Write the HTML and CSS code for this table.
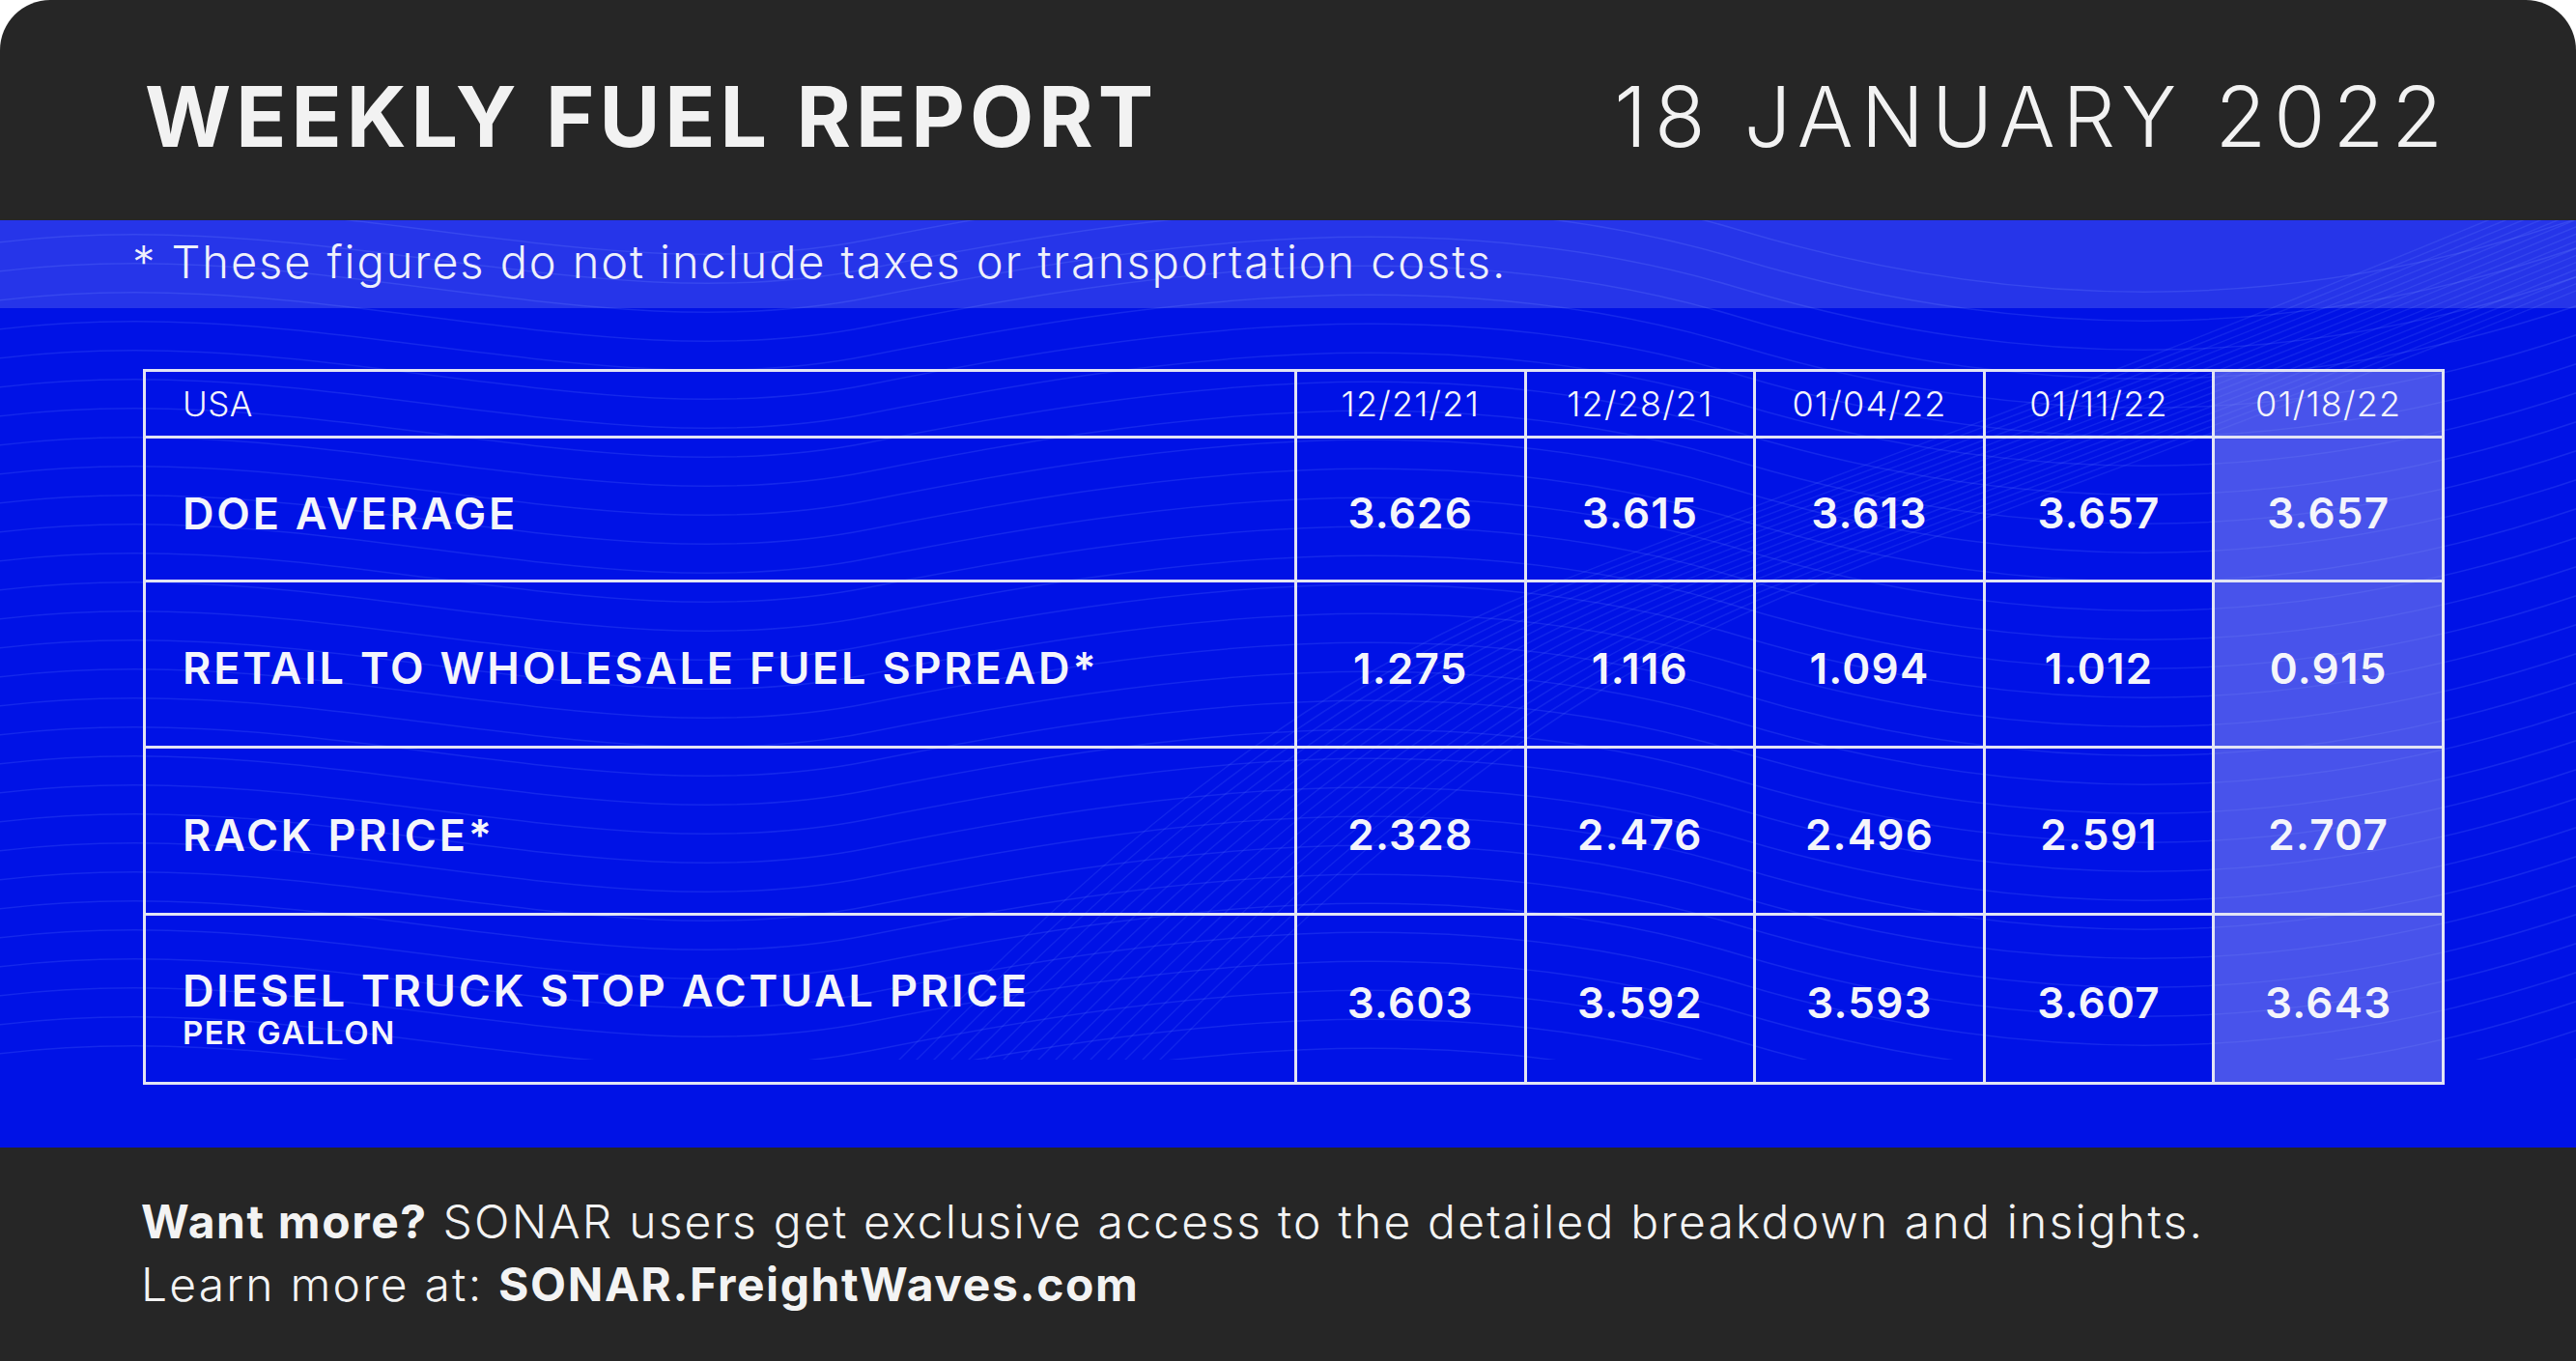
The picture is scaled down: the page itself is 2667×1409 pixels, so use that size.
FILE: index.html
```html
<!DOCTYPE html>
<html lang="en">
<head>
<meta charset="utf-8">
<title>Weekly Fuel Report</title>
<link rel="stylesheet" href="styles.css">
</head>
<body>
<div class="card">
  <header class="top">
    <h1 class="title">WEEKLY FUEL REPORT</h1>
    <div class="date">18 JANUARY 2022</div>
  </header>
  <section class="main">
    <svg class="waves" viewBox="0 0 2667 869" preserveAspectRatio="none" aria-hidden="true">
      <defs>
        <path id="w1" d="M-50 120 C 300 60, 600 200, 900 140 S 1500 40, 1800 130 S 2400 220, 2720 100" />
        <path id="w2" d="M900 900 C 1100 700, 1300 500, 1600 380 S 2100 200, 2720 -60" />
      </defs>
      <g class="wl">
        <use href="#w1" y="-120"/><use href="#w1" y="-90"/><use href="#w1" y="-60"/><use href="#w1" y="-30"/>
        <use href="#w1" y="0"/><use href="#w1" y="30"/><use href="#w1" y="60"/><use href="#w1" y="90"/>
        <use href="#w1" y="120"/><use href="#w1" y="150"/><use href="#w1" y="180"/><use href="#w1" y="210"/>
        <use href="#w1" y="240"/><use href="#w1" y="270"/><use href="#w1" y="300"/><use href="#w1" y="330"/>
        <use href="#w1" y="360"/><use href="#w1" y="390"/><use href="#w1" y="420"/><use href="#w1" y="450"/>
        <use href="#w1" y="480"/><use href="#w1" y="510"/><use href="#w1" y="540"/><use href="#w1" y="570"/>
        <use href="#w1" y="600"/><use href="#w1" y="630"/><use href="#w1" y="660"/><use href="#w1" y="690"/>
        <use href="#w1" y="720"/><use href="#w1" y="750"/><use href="#w1" y="780"/>
      </g>
      <g class="wd">
        <use href="#w2" x="0"/><use href="#w2" x="18"/><use href="#w2" x="36"/><use href="#w2" x="54"/>
        <use href="#w2" x="72"/><use href="#w2" x="90"/><use href="#w2" x="108"/><use href="#w2" x="126"/>
        <use href="#w2" x="144"/><use href="#w2" x="162"/><use href="#w2" x="180"/><use href="#w2" x="198"/>
        <use href="#w2" x="216"/><use href="#w2" x="234"/><use href="#w2" x="252"/><use href="#w2" x="270"/>
      </g>
    </svg>
    <div class="note">* These figures do not include taxes or transportation costs.</div>
    <div class="table-wrap">
      <table class="fuel">
        <colgroup>
          <col class="c-label"><col class="c-num"><col class="c-num"><col class="c-num"><col class="c-num"><col class="c-num">
        </colgroup>
        <thead>
          <tr class="r-head">
            <th class="lbl">USA</th>
            <th>12/21/21</th><th>12/28/21</th><th>01/04/22</th><th>01/11/22</th><th class="hl">01/18/22</th>
          </tr>
        </thead>
        <tbody>
          <tr class="r1">
            <td class="lbl">DOE AVERAGE</td>
            <td>3.626</td><td>3.615</td><td>3.613</td><td>3.657</td><td class="hl">3.657</td>
          </tr>
          <tr class="r2">
            <td class="lbl">RETAIL TO WHOLESALE FUEL SPREAD*</td>
            <td>1.275</td><td>1.116</td><td>1.094</td><td>1.012</td><td class="hl">0.915</td>
          </tr>
          <tr class="r3">
            <td class="lbl">RACK PRICE*</td>
            <td>2.328</td><td>2.476</td><td>2.496</td><td>2.591</td><td class="hl">2.707</td>
          </tr>
          <tr class="r4">
            <td class="lbl lbl-two"><span class="main-lbl">DIESEL TRUCK STOP ACTUAL PRICE</span><span class="sub-lbl">PER GALLON</span></td>
            <td>3.603</td><td>3.592</td><td>3.593</td><td>3.607</td><td class="hl">3.643</td>
          </tr>
        </tbody>
      </table>
    </div>
  </section>
  <footer class="bottom">
    <p class="line"><strong>Want more?</strong> SONAR users get exclusive access to the detailed breakdown and insights.</p>
    <p class="line">Learn more at: <strong>SONAR.FreightWaves.com</strong></p>
  </footer>
</div>
</body>
</html>
```

FILE: styles.css
```css
html, body {
  margin: 0;
  padding: 0;
  background: #ffffff;
}

.card {
  width: 2667px;
  height: 1409px;
  border-radius: 52px 52px 0 0;
  overflow: hidden;
  background: #262626;
  font-family: Inter, "Open Sans", "Liberation Sans", sans-serif;
  color: #f3f3f6;
  display: flex;
  flex-direction: column;
}

/* Header */
.top {
  height: 228px;
  box-sizing: border-box;
  padding: 14px 130px 0 150px;
  display: flex;
  align-items: center;
  justify-content: space-between;
  flex: none;
}

.title {
  margin: 0;
  font-size: 86px;
  line-height: 1;
  font-weight: 700;
  letter-spacing: 5px;
  color: #f2f2f2;
}

.date {
  font-size: 86px;
  line-height: 1;
  font-weight: 300;
  letter-spacing: 8px;
  color: #f2f2f2;
}

/* Blue area */
.main {
  position: relative;
  height: 960px;
  flex: none;
  background: #0012e6;
  overflow: hidden;
}

.waves {
  position: absolute;
  left: 0;
  top: 0;
  width: 2667px;
  height: 869px;
  pointer-events: none;
}

.wl use {
  fill: none;
  stroke: rgba(90, 120, 255, 0.22);
  stroke-width: 1.5;
}

.wd use {
  fill: none;
  stroke: rgba(90, 120, 255, 0.18);
  stroke-width: 1.5;
}

.note {
  position: relative;
  height: 91px;
  box-sizing: border-box;
  padding: 0 0 6px 137px;
  display: flex;
  align-items: center;
  background: rgba(255, 255, 255, 0.15);
  font-size: 47px;
  font-weight: 300;
  letter-spacing: 1.9px;
  line-height: 1;
  color: #eef0fb;
}

.table-wrap {
  position: relative;
  padding: 63px 138px 0 148px;
}

.fuel {
  width: 2383px;
  border-collapse: collapse;
  table-layout: fixed;
  border: 3px solid #e2e4f4;
}

.c-label {
  width: 1192px;
}

.fuel th,
.fuel td {
  border: 3px solid #e2e4f4;
  text-align: center;
  vertical-align: middle;
  padding: 0;
  color: #f4f5fb;
}

.fuel th {
  font-size: 36px;
  font-weight: 300;
  letter-spacing: 1.2px;
  height: 66px;
}

.fuel td {
  font-size: 44px;
  font-weight: 600;
  letter-spacing: 1.2px;
  padding-top: 8px;
}

.fuel .lbl {
  text-align: left;
  padding-left: 38px;
}

.fuel td.lbl {
  font-size: 45px;
  letter-spacing: 2.8px;
}

.fuel th.lbl {
  font-size: 35px;
  letter-spacing: 0.5px;
}

.r1 td { height: 138px; }
.r2 td { height: 161px; }
.r3 td { height: 162px; }
.r4 td { height: 164px; }

.fuel .r4 td.lbl-two {
  height: 150px;
  padding-top: 22px;
}

.main-lbl {
  display: block;
  line-height: 48px;
}

.sub-lbl {
  display: block;
  font-size: 33px;
  font-weight: 600;
  letter-spacing: 1.5px;
  line-height: 38px;
}

.fuel .hl {
  background: rgba(150, 155, 240, 0.48);
}

/* Footer */
.bottom {
  flex: 1;
  padding: 44px 146px 0;
  background: #262626;
}

.line {
  margin: 0;
  font-size: 48px;
  line-height: 65px;
  font-weight: 300;
  letter-spacing: 2.2px;
  color: #f3f3f3;
}

.line strong {
  font-weight: 700;
  letter-spacing: 1.6px;
}
```
